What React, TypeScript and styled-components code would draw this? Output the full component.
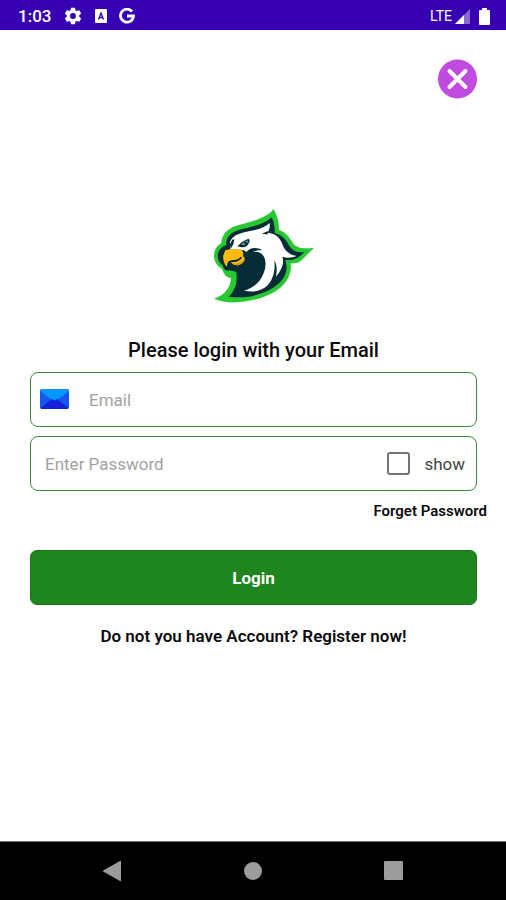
import React, { useState } from "react";
import styled, { createGlobalStyle } from "styled-components";

const GlobalStyle = createGlobalStyle`
  * { box-sizing: border-box; }
  body { margin: 0; background: #fff; font-family: Roboto, sans-serif; color: #0c0c0c; }
  button, input { font-family: inherit; }
`;

const Screen = styled.div`
  display: flex;
  flex-direction: column;
  min-height: 100vh;
`;

const StatusBar = styled.header`
  display: flex;
  align-items: center;
  justify-content: space-between;
  height: 30px;
  padding: 2px 16px 0 18px;
  background: #3700b3;
  color: #fff;
`;

const StatusGroup = styled.div<{ $gap: number }>`
  display: flex;
  align-items: center;
  gap: ${(p) => p.$gap}px;
`;

const Clock = styled.span`
  font-size: 17px;
  line-height: 24px;
  font-weight: 500;
`;

const Network = styled.span`
  font-size: 14px;
  line-height: 24px;
`;

const Icon = styled.svg`
  display: block;
  flex: none;
`;

const Main = styled.main`
  flex: 1;
  display: flex;
  flex-direction: column;
  padding: 29px 28px 0 30px;
`;

const CloseButton = styled.button`
  align-self: flex-end;
  padding: 0;
  border: 0;
  border-radius: 50%;
  background: none;
  cursor: pointer;
`;

const Logo = styled.svg`
  display: block;
  align-self: center;
  margin-top: 101px;
  margin-left: 22px;
`;

const Form = styled.form`
  display: flex;
  flex-direction: column;
  margin: 28px 1px 0 0;
`;

const Title = styled.h1`
  margin: 0 0 10px;
  font-size: 20px;
  line-height: 24px;
  font-weight: 500;
  text-align: center;
`;

const Field = styled.div`
  display: flex;
  align-items: center;
  height: 55px;
  padding: 0 11px 0 8px;
  border: 1px solid #3c8c40;
  border-radius: 8px;

  & + & { margin-top: 9px; }
`;

const Input = styled.input<{ $indent: number }>`
  flex: 1;
  min-width: 0;
  height: 100%;
  padding: 0 0 0 ${(p) => p.$indent}px;
  border: 0;
  outline: 0;
  background: none;
  font-size: 17px;
  color: #222;

  &::placeholder { color: #a2a2a2; opacity: 1; }
`;

const ShowLabel = styled.label`
  display: flex;
  align-items: center;
  gap: 14px;
  font-size: 17px;
  line-height: 24px;
  color: #444;
`;

const Checkbox = styled.input`
  appearance: none;
  width: 23px;
  height: 23px;
  margin: 0;
  border: 2px solid #757575;
  border-radius: 3px;

  &:checked { background: #757575; box-shadow: inset 0 0 0 3px #fff; }
`;

const TextLink = styled.a<{ $small?: boolean }>`
  align-self: ${(p) => (p.$small ? "flex-end" : "center")};
  margin: ${(p) => (p.$small ? "10px -10px 0 0" : "19px 0 0")};
  font-size: ${(p) => (p.$small ? 15 : 17)}px;
  line-height: ${(p) => (p.$small ? 20 : 24)}px;
  font-weight: 600;
  color: inherit;
  text-decoration: none;
`;

const LoginButton = styled.button`
  height: 55px;
  margin-top: 29px;
  border: 1px solid #137a17;
  border-radius: 7px;
  background: #1f851f;
  color: #fff;
  font-size: 17px;
  font-weight: 700;
  cursor: pointer;
`;

const NavBar = styled.nav`
  display: flex;
  align-items: center;
  justify-content: space-between;
  height: 59px;
  padding: 0 102px;
  border-top: 1px solid #777;
  background: #000;
`;

const NavButton = styled.button`
  padding: 0;
  border: 0;
  background: none;
`;

function Eagle() {
  return (
    <Logo width="120" height="110" viewBox="0 0 360 330" role="img" aria-label="Eagle logo">
      <path fill="#27c832" d="M205 27C216 42 222 65 222 89C245 98 253 113 264 129C272 142 289 148 327 143C312 157 300 172 287 183C277 190 264 191 257 190C261 219 248 244 226 263C193 290 145 304 95 307C69 308 45 303 27 296C61 285 77 261 78 234C61 232 56 220 51 207C32 195 26 178 27 165C28 149 36 137 49 130C49 107 64 89 90 79C119 70 163 60 184 46C193 41 201 34 205 27Z" />
      <path fill="#062c35" d="M200 52C208 68 210 86 209 99C229 104 240 115 250 132C258 149 274 160 298 156C281 173 269 182 241 180C250 205 242 231 222 250C188 281 130 298 71 290C90 273 98 249 94 216L75 211C58 215 57 204 52 195C38 185 36 169 40 157C43 146 52 140 64 134C62 111 79 95 109 88C142 80 180 72 200 52Z" />
      <path fill="#fff" d="M76 124C84 103 109 98 139 92C162 88 180 82 194 69C196 80 192 90 188 98C210 100 224 111 232 132C238 152 254 165 275 168C258 175 243 174 232 170C239 188 230 210 213 230C217 207 215 193 208 181C211 206 207 235 188 256C168 276 140 277 117 272C147 264 167 244 176 219C183 200 184 184 176 169C168 156 152 152 130 159L115 150L75 147C79 138 72 130 76 124Z" />
      <path fill="#062c35" d="M83 118L88 119L85 133L77 146L75 132ZM97 139L112 125L130 116C137 120 134 129 126 137C118 143 106 142 97 139ZM123 159C132 142 155 139 172 151C161 149 147 152 135 162L124 174ZM189 103L170 102L188 93Z" />
      <path fill="#8ba9a9" d="M110 131L128 121C130 129 122 136 111 135Z" />
      <path fill="#062c35" d="M118 126h7v6h-7z" />
      <path fill="#ffba10" d="M61 151C76 146 94 147 108 149C115 153 116 161 114 169C122 174 120 183 112 188L102 195C90 198 80 192 78 187L96 184L102 176C88 182 74 179 69 185L65 200C57 190 53 178 55 166Z" />
      <path fill="#062c35" d="M80 180C92 183 103 177 107 170L111 172C106 183 94 187 82 186Z" />
      <path fill="#d8920f" d="M81 189C94 194 107 190 119 178C119 188 107 196 96 196Q87 195 81 189Z" />
    </Logo>
  );
}

export default function App() {
  const [show, setShow] = useState(false);
  return (
    <>
      <GlobalStyle />
      <Screen>
        <StatusBar>
          <StatusGroup $gap={12}>
            <Clock>1:03</Clock>
            <Icon width="20" height="20" viewBox="0 0 24 24" fill="#fff">
              <path d="M19.43 12.98c.04-.32.07-.64.07-.98s-.03-.66-.07-.98l2.11-1.65c.19-.15.24-.42.12-.64l-2-3.46c-.12-.22-.39-.3-.61-.22l-2.49 1c-.52-.4-1.08-.73-1.69-.98l-.38-2.65A.49.49 0 0 0 14 2h-4c-.25 0-.46.18-.49.42l-.38 2.65c-.61.25-1.17.59-1.69.98l-2.49-1c-.23-.09-.49 0-.61.22l-2 3.46c-.13.22-.07.49.12.64l2.11 1.65c-.04.32-.07.65-.07.98s.03.66.07.98l-2.11 1.65c-.19.15-.24.42-.12.64l2 3.46c.12.22.39.3.61.22l2.49-1c.52.4 1.08.73 1.69.98l.38 2.65c.03.24.24.42.49.42h4c.25 0 .46-.18.49-.42l.38-2.65c.61-.25 1.17-.59 1.69-.98l2.49 1c.23.09.49 0 .61-.22l2-3.46c.12-.22.07-.49-.12-.64zM12 15.5a3.5 3.5 0 1 1 0-7 3.5 3.5 0 0 1 0 7z" />
            </Icon>
            <Icon width="12" height="14" viewBox="0 0 12 14">
              <rect width="12" height="14" rx="1" fill="#fff" />
              <path d="M3.5 10.500L6 4L8.500 10.500M4.500 8.500H7.500" fill="none" stroke="#3700b3" strokeWidth="1.300" />
            </Icon>
            <Icon width="16" height="16" viewBox="0 0 16 16">
              <path d="M13 3.5A6.5 6.5 0 1 0 14.5 8H8" fill="none" stroke="#fff" strokeWidth="2.8" />
            </Icon>
          </StatusGroup>
          <StatusGroup $gap={9}>
            <StatusGroup $gap={3}>
              <Network>LTE</Network>
              <Icon width="15" height="15" viewBox="0 0 15 15">
                <path d="M0 15L15 0V15Z" fill="#8b69d4" />
                <path d="M0 15L9 6V15Z" fill="#fff" />
              </Icon>
            </StatusGroup>
            <Icon width="11" height="17" viewBox="0 0 11 17">
              <path d="M3 0H8V2H10Q11 2 11 3V16Q11 17 10 17H1Q0 17 0 16V3Q0 2 1 2H3Z" fill="#fff" />
            </Icon>
          </StatusGroup>
        </StatusBar>
        <Main>
          <CloseButton type="button" aria-label="Close">
            <Icon width="40" height="40" viewBox="0 0 40 40">
              <circle cx="19.500" cy="20" r="19.500" fill="#c14be0" />
              <path d="M11.500 12L27.500 28M27.500 12L11.500 28" stroke="#fff" strokeWidth="4" strokeLinecap="round" />
            </Icon>
          </CloseButton>
          <Eagle />
          <Form onSubmit={(e) => e.preventDefault()}>
            <Title>Please login with your Email</Title>
            <Field>
              <Icon width="31" height="21" viewBox="0 0 31 21">
                <rect x="1" width="29" height="20" rx="2" fill="#1557ee" />
                <path d="M1 2Q1 0 3 0H28Q30 0 30 2L17 12Q15.500 13 14 12Z" fill="#0796ff" />
                <path d="M1.500 19L13 10L15.500 11.500L18 10L29.500 19Q29 20 28 20H3Q2 20 1.500 19Z" fill="#1422dc" />
              </Icon>
              <Input $indent={19} type="email" placeholder="Email" aria-label="Email" />
            </Field>
            <Field>
              <Input $indent={6} type={show ? "text" : "password"} placeholder="Enter Password" aria-label="Enter Password" />
              <ShowLabel>
                <Checkbox type="checkbox" checked={show} onChange={(e) => setShow(e.target.checked)} />
                show
              </ShowLabel>
            </Field>
            <TextLink $small href="#forgot">Forget Password</TextLink>
            <LoginButton type="submit">Login</LoginButton>
            <TextLink href="#register">Do not you have Account? Register now!</TextLink>
          </Form>
        </Main>
        <NavBar>
          <NavButton type="button" aria-label="Back">
            <Icon width="20" height="22" viewBox="0 0 20 22"><path d="M18 1Q19 0 19 2V20Q19 22 18 21L2 12Q0 11 2 10Z" fill="#9c9c9c" /></Icon>
          </NavButton>
          <NavButton type="button" aria-label="Home">
            <Icon width="18" height="18" viewBox="0 0 18 18"><circle cx="9" cy="9" r="9" fill="#9c9c9c" /></Icon>
          </NavButton>
          <NavButton type="button" aria-label="Recent apps">
            <Icon width="20" height="20" viewBox="0 0 20 20"><rect width="19" height="19" rx="1" fill="#9c9c9c" /></Icon>
          </NavButton>
        </NavBar>
      </Screen>
    </>
  );
}
